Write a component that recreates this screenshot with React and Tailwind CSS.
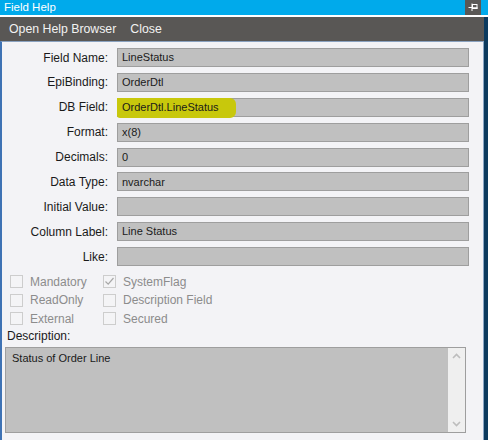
import React from 'react';

const fields = [
  { label: 'Field Name:', value: 'LineStatus' },
  { label: 'EpiBinding:', value: 'OrderDtl' },
  { label: 'DB Field:', value: 'OrderDtl.LineStatus', highlight: true },
  { label: 'Format:', value: 'x(8)' },
  { label: 'Decimals:', value: '0' },
  { label: 'Data Type:', value: 'nvarchar' },
  { label: 'Initial Value:', value: '' },
  { label: 'Column Label:', value: 'Line Status' },
  { label: 'Like:', value: '' },
];

const flags = [
  [{ label: 'Mandatory' }, { label: 'SystemFlag', checked: true }],
  [{ label: 'ReadOnly' }, { label: 'Description Field' }],
  [{ label: 'External' }, { label: 'Secured' }],
];

function Check({ label, checked }) {
  return (
    <div className="flex items-center gap-[7px]">
      <div className="w-[13px] h-[13px] border border-[#cdcdcd] bg-[#f4f4f6] flex items-center justify-center">
        {checked && (
          <svg width="11" height="11" viewBox="0 0 11 11">
            <path d="M1.5 5.5 L4.2 8.2 L9.5 2" fill="none" stroke="#a8a8a8" strokeWidth="1.2" />
          </svg>
        )}
      </div>
      <span className="text-[12px] text-[#8c8c8c] leading-none">{label}</span>
    </div>
  );
}

export default function App() {
  return (
    <div
      className="w-[488px] h-[440px] overflow-hidden flex flex-col bg-[#f3f3f6]"
      style={{ fontFamily: '"Liberation Sans", Arial, sans-serif' }}
    >
      {/* title bar */}
      <div className="h-[15px] bg-[#00aaeb] flex items-center justify-between shrink-0">
        <span className="pl-[4px] text-white text-[11.5px] leading-none">Field Help</span>
        <div className="w-[16px] h-[15px] bg-[#5a5856] mr-[7px] flex items-center justify-center">
          <svg width="16" height="15" viewBox="0 0 16 15">
            <path d="M3.5 7.5 H7" stroke="#fff" strokeWidth="1" />
            <path d="M7 3.5 V11" stroke="#fff" strokeWidth="1" />
            <rect x="7.5" y="4.5" width="4.5" height="4" fill="none" stroke="#fff" strokeWidth="1" />
            <path d="M7.5 8 H12.5" stroke="#fff" strokeWidth="1.5" />
          </svg>
        </div>
      </div>
      <div className="h-[2px] bg-white shrink-0" />

      <div className="flex flex-1 min-h-0">
        <div className="flex-1 flex flex-col">
          {/* menu */}
          <div className="h-[24px] bg-[#595755] flex items-center gap-[14px] pl-[9px] text-[#f2f2f2] text-[12.3px] shrink-0">
            <span>Open Help Browser</span>
            <span>Close</span>
          </div>

          {/* content */}
          <div className="flex-1 border-l-2 border-l-[#3e72b4] border-t border-t-[#8aa2c0] border-r border-r-[#8aa6c4] bg-[#f3f3f6] pt-[6px]">
            <div className="flex flex-col gap-[5.9px]">
              {fields.map((f) => (
                <div key={f.label} className="flex items-center h-[19px]">
                  <div className="w-[106px] text-right text-[12px] text-[#1a1a1a]">{f.label}</div>
                  <div className="ml-[9px] w-[352px] h-[19px] border border-[#9e9e9e] bg-[#c0c0c0] flex items-center relative">
                    {f.highlight && (
                      <div className="absolute left-[-1px] top-[-1px] w-[119px] h-[20px] bg-[#c8c80c] rounded-r-[6px] rounded-bl-[3px]" />
                    )}
                    <span className="relative pl-[4px] text-[11px] text-[#1a1a1a]">{f.value}</span>
                  </div>
                </div>
              ))}
            </div>

            <div className="mt-[9px] ml-[8px] flex flex-col gap-[5.5px]">
              {flags.map((row, i) => (
                <div key={i} className="flex">
                  <div className="w-[93px]"><Check {...row[0]} /></div>
                  <Check {...row[1]} />
                </div>
              ))}
            </div>

            <div className="mt-[5px] ml-[5px] text-[12px] text-[#1a1a1a] leading-none">Description:</div>

            <div className="mt-[5px] ml-[3px] w-[461px] h-[86px] border border-[#9e9e9e] bg-[#c0c0c0] flex">
              <div className="flex-1 pl-[6px] pt-[2px] text-[11px] text-[#1a1a1a]">Status of Order Line</div>
              <div className="w-[17px] bg-[#efefef] flex flex-col justify-between items-center py-[5px]">
                <svg width="9" height="6" viewBox="0 0 9 6">
                  <path d="M1 5 L4.5 1.5 L8 5" fill="none" stroke="#bdbdbd" strokeWidth="1.6" />
                </svg>
                <svg width="9" height="6" viewBox="0 0 9 6">
                  <path d="M1 1 L4.5 4.5 L8 1" fill="none" stroke="#bdbdbd" strokeWidth="1.6" />
                </svg>
              </div>
            </div>
          </div>
        </div>
        <div className="w-[4px] bg-[#0c3a5e]" />
      </div>
    </div>
  );
}
